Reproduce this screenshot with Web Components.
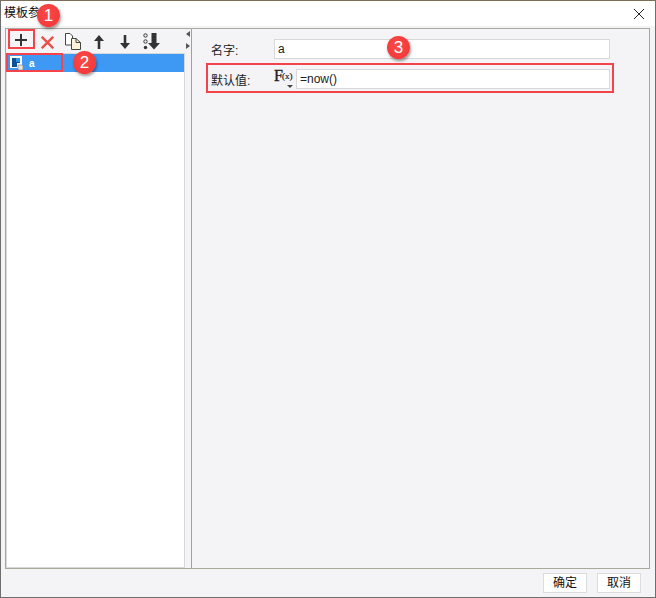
<!DOCTYPE html>
<html>
<head>
<meta charset="utf-8">
<style>
    html, body { margin: 0; padding: 0; background: #fff; }
    body { font-family: "Liberation Sans", "Noto Sans CJK SC", sans-serif; font-size: 12px; color: #222; }
</style>
</head>
<body>
<template-dialog></template-dialog>

<script>
const FONT = '"Liberation Sans", "Noto Sans CJK SC", sans-serif';

// red numbered marker that lies over the screenshot
class NumBadge extends HTMLElement {
    connectedCallback() {
        const root = this.attachShadow({mode: 'open'});
        root.innerHTML = `
        <style>
            :host {
                position: absolute;
                width: 23px;
                height: 23px;
                border-radius: 50%;
                background: radial-gradient(circle at 45% 40%, #fb4a48, #ef3434);
                box-shadow: 1px 2px 3px rgba(0,0,0,.4);
                color: #fff;
                font: 17px/23px "Liberation Sans", sans-serif;
                text-align: center;
            }
        </style>
        <slot></slot>`;
    }
}

// plain red rectangle drawn round the thing being pointed at
class RedBox extends HTMLElement {
    connectedCallback() {
        const root = this.attachShadow({mode: 'open'});
        root.innerHTML = `
        <style>
            :host { position: absolute; box-sizing: border-box; border: 2px solid #f4434a; pointer-events: none; }
        </style>`;
    }
}

class TitleBar extends HTMLElement {
    connectedCallback() {
        const root = this.attachShadow({mode: 'open'});
        root.innerHTML = `
        <style>
            :host {
                display: flex;
                justify-content: space-between;
                height: 25px;
                background: #fff;
                padding: 3px 10px 0 3px;
                box-sizing: border-box;
                font: 12px/18px ${FONT};
                color: #111;
            }
            svg { display: block; margin-top: 4px; }
        </style>
        <span><slot></slot></span>
        <svg width="12" height="12" viewBox="0 0 12 12"><path d="M1 1L11 11M11 1L1 11" stroke="#222" stroke-width="1" fill="none"/></svg>`;
    }
}

class ToolBar extends HTMLElement {
    connectedCallback() {
        const root = this.attachShadow({mode: 'open'});
        root.innerHTML = `
        <style>
            :host { display: flex; align-items: center; height: 24px; flex: none; background: #f4f4f6; }
            svg { display: block; flex: none; }
        </style>
        <svg style="margin:0 0 2px 9px" width="12" height="12" viewBox="0 0 12 12"><path d="M0 6H12M6 0V12" stroke="#333" stroke-width="2" fill="none"/></svg>
        <svg style="margin:2px 0 0 14px" width="13" height="13" viewBox="0 0 13 13"><path d="M.8 .8L12.2 12.2M12.2 .8L.8 12.2" stroke="#e8504a" stroke-width="2.4" fill="none"/></svg>
        <svg style="margin-left:11px" width="16" height="17" viewBox="0 0 16 17">
            <path d="M.5 .5H5L7.5 3V12H.5Z" fill="#fff" stroke="#444"/>
            <path d="M6.5 5.5H11L15.5 9.5V16.5H6.5Z" fill="#fdf3d8" stroke="#444"/>
            <path d="M11 5.5V9.5H15.5" fill="none" stroke="#444"/>
        </svg>
        <svg style="margin:2px 0 0 13px" width="10" height="14" viewBox="0 0 10 14"><path d="M5 0L10 6H6.3V14H3.7V6H0Z" fill="#333"/></svg>
        <svg style="margin:2px 0 0 16px" width="10" height="14" viewBox="0 0 10 14"><path d="M5 14L10 8H6.3V0H3.7V8H0Z" fill="#333"/></svg>
        <svg style="margin-left:13px" width="17" height="17" viewBox="0 0 17 17">
            <circle cx="2.5" cy="2.5" r="1.7" fill="none" stroke="#333"/><circle cx="2.5" cy="8.5" r="1.7" fill="none" stroke="#333"/><circle cx="2.5" cy="14.5" r="1.7" fill="#333"/>
            <path d="M11 16.5L17 10H13.5V0H8.5V10H5Z" fill="#333"/>
        </svg>`;
    }
}

class ParamItem extends HTMLElement {
    connectedCallback() {
        const root = this.attachShadow({mode: 'open'});
        root.innerHTML = `
        <style>
            :host {
                display: flex;
                align-items: center;
                height: 18px;
                background: #3e99f5;
                color: #fff;
                font: bold 10px ${FONT};
                padding-left: 3px;
            }
            svg { display: block; margin-right: 6px; flex: none; }
        </style>
        <svg width="13" height="14" viewBox="0 0 13 14">
            <rect x="0" y="0" width="12" height="12" fill="#fff"/>
            <path d="M2 2H10V7H7V11H2Z" fill="#0f4f98"/>
            <rect x="6" y="2" width="4" height="4" fill="#2f8fe0"/>
            <path d="M8 9H13V14H8Z" fill="#e4e4e4" stroke="#777" stroke-width=".6"/>
        </svg>
        <slot></slot>`;
    }
}

class FieldRow extends HTMLElement {
    connectedCallback() {
        const root = this.attachShadow({mode: 'open'});
        root.innerHTML = `
        <style>
            :host { display: flex; align-items: center; height: 20px; font: 12px ${FONT}; color: #222; }
            .label { flex: none; width: 63px; margin-left: -1px; }
            .value {
                flex: 1;
                box-sizing: border-box;
                height: 20px;
                line-height: 18px;
                background: #fff;
                border: 1px solid #d8d8d8;
                padding-left: 3px;
                color: #222;
            }
        </style>
        <span class="label"><slot name="label"></slot></span>
        <slot name="extra"></slot>
        <div class="value"><slot></slot></div>`;
    }
}

class FxIcon extends HTMLElement {
    connectedCallback() {
        const root = this.attachShadow({mode: 'open'});
        root.innerHTML = `
        <style>
            :host { display: block; position: relative; width: 22px; height: 20px; flex: none; color: #222; }
            b { position: absolute; left: 0; top: -2px; font: normal 16px "Liberation Serif", serif; -webkit-text-stroke: .4px #222; }
            i { position: absolute; left: 8px; top: 2px; font: normal 9px "Liberation Serif", serif; -webkit-text-stroke: .2px #222; }
            u { position: absolute; left: 13px; top: 16px; width: 0; height: 0; border: 3px solid transparent; border-top: 3px solid #444; border-bottom: 0; }
        </style>
        <b>F</b><i>(x)</i><u></u>`;
    }
}

class DlgButton extends HTMLElement {
    connectedCallback() {
        const root = this.attachShadow({mode: 'open'});
        root.innerHTML = `
        <style>
            :host {
                display: block;
                box-sizing: border-box;
                width: 44px;
                height: 20px;
                background: #fff;
                border: 1px solid #dcdcdc;
                text-align: center;
                font: 12px/18px ${FONT};
                color: #111;
            }
        </style>
        <slot></slot>`;
    }
}

class TemplateDialog extends HTMLElement {
    connectedCallback() {
        const root = this.attachShadow({mode: 'open'});
        root.innerHTML = `
        <style>
            :host {
                display: flex;
                flex-direction: column;
                position: relative;
                box-sizing: border-box;
                width: 656px;
                height: 598px;
                background: #f4f4f6;
                border: 1px solid #6e6e6e;
                border-top-color: #7d6f55;
            }
            .main {
                flex: none;
                height: 541px;
                margin: 2px 5px 0 4px;
                box-sizing: border-box;
                border: 1px solid #a8a89c;
                display: flex;
            }
            .left { width: 179px; flex: none; display: flex; flex-direction: column; }
            .list { flex: 1; background: #fff; border: 1px solid #d8d8d8; }
            .split { width: 6px; flex: none; border-right: 1px solid #a0a0a0; display: flex; flex-direction: column; align-items: center; gap: 6px; padding-top: 2px; }
            .split span { display: block; width: 0; height: 0; border: 3px solid transparent; }
            .split .l { border-left: 0; border-right: 4px solid #555; }
            .split .r { border-right: 0; border-left: 4px solid #555; }
            .right { flex: 1; padding: 10px 39px 0 20px; display: flex; flex-direction: column; gap: 10px; }
            .foot { flex: 1; display: flex; justify-content: flex-end; align-items: flex-start; gap: 10px; padding: 4px 14px 0 0; }
        </style>
        <title-bar>模板参数</title-bar>
        <div class="main">
            <div class="left">
                <tool-bar></tool-bar>
                <div class="list"><param-item>a</param-item></div>
            </div>
            <div class="split"><span class="l"></span><span class="r"></span></div>
            <div class="right">
                <field-row><span slot="label">名字:</span>a</field-row>
                <field-row><span slot="label">默认值:</span><fx-icon slot="extra"></fx-icon>=now()</field-row>
            </div>
        </div>
        <div class="foot">
            <dlg-button>确定</dlg-button>
            <dlg-button>取消</dlg-button>
        </div>
        <red-box style="left:7px;top:28px;width:27px;height:20px"></red-box>
        <red-box style="left:5px;top:52px;width:57px;height:19px"></red-box>
        <red-box style="left:205px;top:62px;width:408px;height:30px"></red-box>
        <num-badge style="left:36px;top:3px">1</num-badge>
        <num-badge style="left:72px;top:50px">2</num-badge>
        <num-badge style="left:386px;top:35px">3</num-badge>`;
    }
}

customElements.define('num-badge', NumBadge);
customElements.define('red-box', RedBox);
customElements.define('title-bar', TitleBar);
customElements.define('tool-bar', ToolBar);
customElements.define('param-item', ParamItem);
customElements.define('field-row', FieldRow);
customElements.define('fx-icon', FxIcon);
customElements.define('dlg-button', DlgButton);
customElements.define('template-dialog', TemplateDialog);
</script>
</body>
</html>
